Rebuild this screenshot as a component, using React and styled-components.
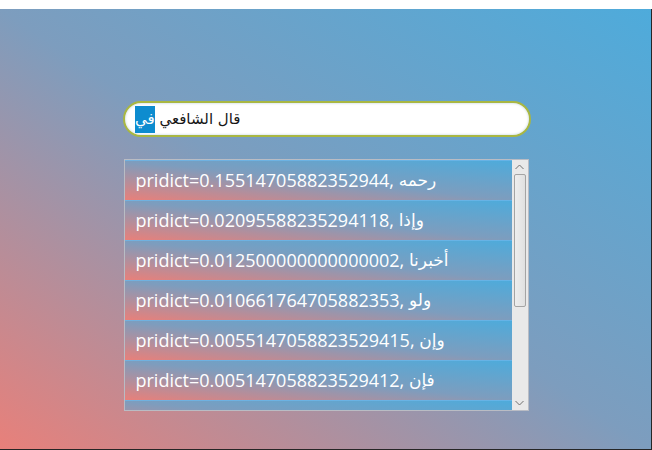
import React from "react";
import styled, { createGlobalStyle } from "styled-components";

const GlobalStyle = createGlobalStyle`
  html, body {
    margin: 0;
    padding: 0;
    background: #ffffff;
  }
  body {
    width: 652px;
    height: 450px;
    overflow: hidden;
    font-family: "Open Sans", "DejaVu Sans", sans-serif;
  }
`;

const TopStrip = styled.div`
  height: 9px;
  background: #ffffff;
`;

const Window = styled.div`
  box-sizing: border-box;
  width: 652px;
  height: 441px;
  border-right: 1px solid #262626;
  border-bottom: 1px solid #262626;
  background: linear-gradient(to top right, #e8807a 0%, #7d9dbe 50%, #4eabdb 100%);
  display: flex;
  flex-direction: column;
  align-items: center;
  padding-top: 92px;
  gap: 22px;
`;

const SearchBox = styled.div`
  box-sizing: border-box;
  width: 408px;
  height: 36px;
  margin-left: 3px;
  border: 2px solid #a9b742;
  border-radius: 18px;
  background: #ffffff;
  box-shadow: inset 0 0 2px 1px #dfe9ef;
  display: flex;
  align-items: center;
  padding: 0 10px;
  font-family: "DejaVu Sans", "Noto Sans", sans-serif;
  font-size: 15px;
  font-weight: 500;
  color: #161616;
`;

const Selected = styled.span`
  background: #0d8ccf;
  color: #ffffff;
  padding: 4px 0 5px;
`;

const ListBox = styled.div`
  box-sizing: border-box;
  width: 405px;
  height: 252px;
  margin-left: 1px;
  border: 1px solid #b9bcc4;
  display: flex;
  overflow: hidden;
`;

const Items = styled.div`
  flex: 1;
  display: flex;
  flex-direction: column;
  overflow: hidden;
`;

const Item = styled.div`
  box-sizing: border-box;
  flex: none;
  height: 40px;
  border-top: 1px solid rgba(100, 182, 234, 0.9);
  background: linear-gradient(to top right, #e8807a 0%, #7d9dbe 50%, #4eabdb 100%);
  display: flex;
  align-items: center;
  padding-left: 11px;
  padding-bottom: 1px;
  color: #ffffff;
  font-size: 18px;
  white-space: nowrap;
`;

const Arabic = styled.span`
  font-family: "DejaVu Sans", sans-serif;
  font-size: 17px;
`;

const ScrollBar = styled.div`
  width: 16px;
  background: #e9e9e9;
  display: flex;
  flex-direction: column;
  align-items: center;
`;

const Arrow = styled.div`
  height: 14px;
  width: 16px;
  display: flex;
  align-items: center;
  justify-content: center;
`;

const Track = styled.div`
  flex: 1;
  width: 100%;
  display: flex;
  justify-content: center;
`;

const Thumb = styled.div`
  box-sizing: border-box;
  width: 12px;
  height: 133px;
  border: 1px solid #a4a4a4;
  border-radius: 2px;
  background: linear-gradient(to right, #eeeeee, #e0e0e0);
`;

const rows = [
  ["0.15514705882352944", "رحمه"],
  ["0.02095588235294118", "وإذا"],
  ["0.012500000000000002", "أخبرنا"],
  ["0.010661764705882353", "ولو"],
  ["0.0055147058823529415", "وإن"],
  ["0.005147058823529412", "فإن"],
];

function Chevron({ up }) {
  return (
    <svg width="9" height="6" viewBox="0 0 9 6">
      <path
        d={up ? "M0.5 5 L4.5 1 L8.5 5" : "M0.5 1 L4.5 5 L8.5 1"}
        fill="none"
        stroke="#707070"
        strokeWidth="1"
      />
    </svg>
  );
}

export default function App() {
  return (
    <>
      <GlobalStyle />
      <TopStrip />
      <Window>
        <SearchBox>
          <span>
            قال الشافعي <Selected>في</Selected>
          </span>
        </SearchBox>
        <ListBox>
          <Items>
            {rows.map(([p, w]) => (
              <Item key={p}>
                pridict={p},&nbsp;<Arabic>{w}</Arabic>
              </Item>
            ))}
            <Item />
          </Items>
          <ScrollBar>
            <Arrow>
              <Chevron up />
            </Arrow>
            <Track>
              <Thumb />
            </Track>
            <Arrow>
              <Chevron />
            </Arrow>
          </ScrollBar>
        </ListBox>
      </Window>
    </>
  );
}
